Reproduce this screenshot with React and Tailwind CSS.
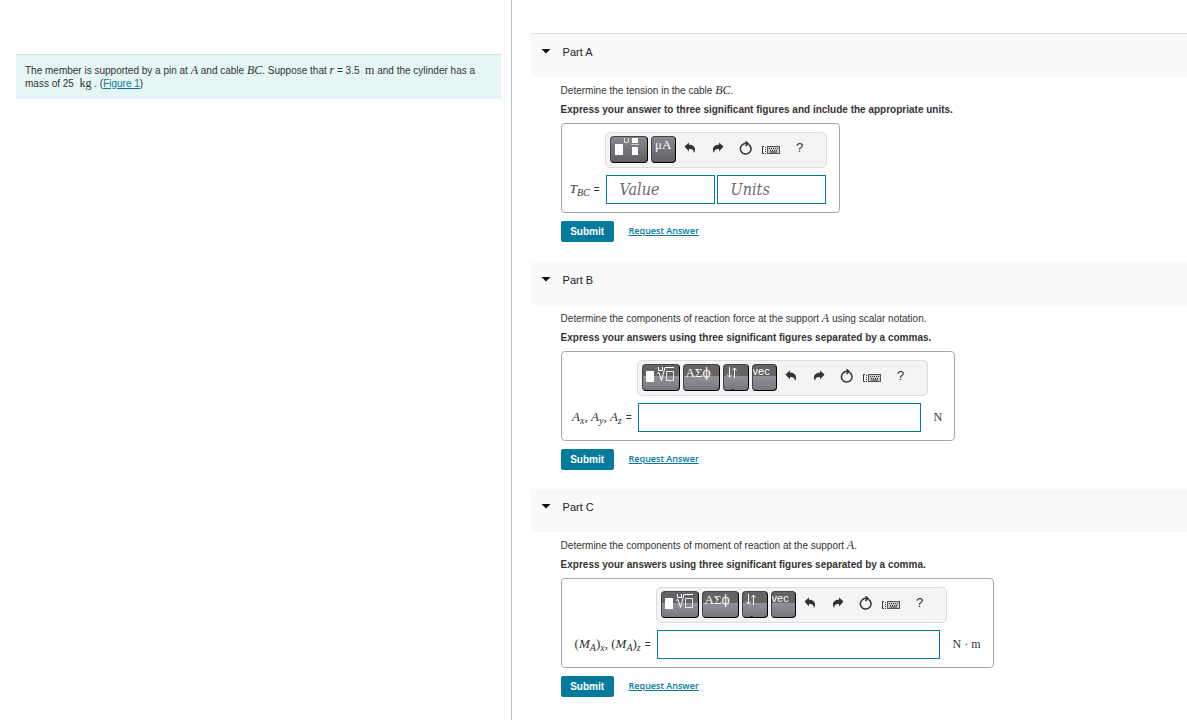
import React from "react";

const SANS = "font-['Liberation_Sans',Arial,sans-serif]";
const COPY = "font-['Liberation_Sans',Arial,sans-serif] text-[10px]";
const SERIF = "font-['Liberation_Serif','Times_New_Roman',serif]";

// math variable set in serif italics
function V({ children }) {
  return <i className={`${SERIF} text-[12px] leading-none`}>{children}</i>;
}

function Unit({ children }) {
  return <span className={`${SERIF} text-[12px] leading-none`}>{children}</span>;
}

function Sub({ children }) {
  return <span className="relative top-[3px] text-[10px]">{children}</span>;
}

function DarkButton({ label, className, children }) {
  return (
    <button
      type="button"
      aria-label={label}
      className={`h-[27px] shrink-0 overflow-hidden rounded-[4px] border border-t-[#444] border-r-black border-b-black border-l-[#444] bg-linear-to-b text-left text-white ${className}`}
    >
      {children}
    </button>
  );
}

const SPLIT = "from-[#646464] from-42% to-[#77777d] via-[#92929a] via-43%";
const SMOOTH = "from-[#88888e] to-[#606064]";

function FractionIcon() {
  return (
    <svg width="35" height="24" viewBox="0 0 35 24" fill="#fff">
      <rect x="4" y="6" width="8" height="11" />
      <path d="M13.5 0v4.500h4V0" fill="none" stroke="#ddd" />
      <rect x="21" y="0" width="6" height="5" />
      <rect x="20" y="6" width="8" height="1" fill="#ccc" />
      <rect x="21" y="9" width="6" height="8" />
    </svg>
  );
}

function RootIcon() {
  return (
    <svg width="35" height="24" viewBox="0 0 35 24" fill="none" stroke="#fff">
      <rect x="3" y="5" width="8" height="11" fill="#fff" stroke="none" />
      <path d="M15.500 1v3.500h4V1M14 7.500l2-1 2.500 8 3.500-13H31" />
      <rect x="23.500" y="5.500" width="7" height="9" stroke="#e4e4e4" />
    </svg>
  );
}

function ArrowsIcon() {
  return (
    <svg width="24" height="24" viewBox="0 0 24 24" fill="none" stroke="#fff">
      <path d="M5.500 1v10M3 8.500l2.500 2.500L8 8.500M10.500 12V2M8.500 4.500l2-2.500 2 2.500" />
      <path d="M7 23.500h3" stroke="#333" />
    </svg>
  );
}

function UndoIcon({ flip }) {
  return (
    <svg width="12" height="12" viewBox="0 0 12 12" fill="#333" className={flip ? "-scale-x-100" : ""}>
      <path d="M0.500 4.500L5 0.500v2.300c3.800 0 6.500 2 6 5.700-.2 1.200-.6 2-1.200 2.500.1-2.600-1-4-4.800-4v2.500z" />
    </svg>
  );
}

function ResetIcon() {
  return (
    <svg width="14" height="14" viewBox="0 0 14 14" fill="none" stroke="#333" strokeWidth="1.500">
      <path d="M9.500 3.300A5.300 5.300 0 1 1 5 2.800" />
      <path d="M4.500 2.500H9M6.500 0.300L9 2.600 6.500 5" />
    </svg>
  );
}

function KeyboardIcon() {
  return (
    <svg width="20" height="10" viewBox="0 0 20 10" fill="none" stroke="#333">
      <path d="M3 1.500H1.500v7H3" />
      <path d="M4.500 2v7" strokeDasharray="1 1" />
      <rect x="6.500" y="1.500" width="12" height="7" fill="#ccc" stroke="#555" />
      <path d="M8 3.500h9M9 5.500h8" strokeDasharray="1 1" />
      <path d="M9 7h7" />
    </svg>
  );
}

const iconButton = "flex h-6 items-center justify-center";

function Toolbar({ units }) {
  return (
    <div className="flex h-9 items-start rounded-[5px] border border-[#ddd] bg-[#f4f4f4] pt-[3px] pl-1">
      <div className="flex gap-[3px]">
        {units ? (
          <>
            <DarkButton label="Templates" className={`w-[38px] ${SMOOTH}`}>
              <FractionIcon />
            </DarkButton>
            <DarkButton label="Unit symbols" className={`flex w-[25px] justify-center ${SERIF} ${SMOOTH} text-[13px] leading-4`}>
              μA
            </DarkButton>
          </>
        ) : (
          <>
            <DarkButton label="Templates" className={`w-[38px] ${SPLIT}`}>
              <RootIcon />
            </DarkButton>
            <DarkButton label="Greek symbols" className={`flex w-[37px] pl-[2px] ${SERIF} ${SPLIT} text-[13px] leading-4`}>
              ΑΣ<span className="font-['DejaVu_Serif',serif] text-[12px]">ϕ</span>
            </DarkButton>
            <DarkButton label="Arrows" className={`w-[26px] ${SPLIT}`}>
              <ArrowsIcon />
            </DarkButton>
            <DarkButton label="Vectors" className={`flex w-[25px] ${SANS} ${SPLIT} text-[11px] leading-3`}>
              vec
            </DarkButton>
          </>
        )}
      </div>
      <button type="button" aria-label="Undo" className={`${iconButton} w-7`}>
        <UndoIcon />
      </button>
      <button type="button" aria-label="Redo" className={`${iconButton} w-7`}>
        <UndoIcon flip />
      </button>
      <button type="button" aria-label="Reset" className={`${iconButton} w-7`}>
        <ResetIcon />
      </button>
      <button type="button" aria-label="Keyboard shortcuts" className={`${iconButton} w-[22px] pt-1`}>
        <KeyboardIcon />
      </button>
      <button type="button" aria-label="Help" className={`${iconButton} w-9 text-[13px] text-[#333]`}>
        ?
      </button>
      <span className="w-2" />
    </div>
  );
}

const inputStyle =
  "h-[29px] min-w-0 border border-[#047a9c] bg-white px-[13px] font-['DejaVu_Serif_Condensed','DejaVu_Serif',serif] text-[16px] italic outline-none placeholder:text-[#6b6b6b]";

function AnswerBox({ id, label, labelWidth, unit, units }) {
  return (
    <div className="flex w-fit rounded-[4px] border border-[#a6a6a6] pt-2 pr-3 pb-2 pl-2">
      <label
        htmlFor={id}
        className={`${SERIF} mt-[42px] flex h-[29px] items-center justify-end pr-[5px] text-[13px] whitespace-nowrap text-[#333] ${labelWidth}`}
      >
        {label}
      </label>
      <div className="flex flex-col gap-[7px]">
        <Toolbar units={units} />
        {units ? (
          <div className="flex gap-[2px] px-px">
            <input id={id} placeholder="Value" className={`${inputStyle} w-[109px]`} />
            <input aria-label="Units" placeholder="Units" className={`${inputStyle} w-[109px]`} />
          </div>
        ) : (
          <input id={id} className={`${inputStyle} ml-px w-[283px]`} />
        )}
      </div>
      {unit && (
        <span className={`${SERIF} mt-[42px] flex h-[29px] items-center pl-[6px] text-[12px] text-[#333]`}>{unit}</span>
      )}
    </div>
  );
}

function Part({ title, first, text, instruction, children }) {
  return (
    <section className={first ? "pb-5" : "pb-[19px]"}>
      <div className={`bg-[#f9f9f9] ${first ? "border-t border-[#ddd]" : ""}`}>
        <button type="button" className="flex h-[43px] w-full items-start pt-[9px] pl-[10px] text-[#222]">
          <svg width="10" height="16" viewBox="0 0 10 16" className="mr-3">
            <path d="M0.500 6h9L5 10.500z" fill="#111" />
          </svg>
          <span className="text-[11px] leading-[18px]">{title}</span>
        </button>
      </div>
      <div className="pt-1 pl-[30px]">
        <p className={`h-[19px] leading-[19px] ${COPY}`}>{text}</p>
        <p className={`h-[19px] leading-[19px] font-bold ${COPY}`}>{instruction}</p>
        <div className="mt-1">{children}</div>
        <div className="mt-2 flex items-center gap-[15px]">
          <button type="button" className="h-[21px] w-[53px] rounded-[2px] bg-[#047a9c] text-[10px] font-bold text-white">
            Submit
          </button>
          <a href="#answer" className="pb-px font-['Open_Sans',sans-serif] text-[9px] leading-3 font-semibold text-[#047a9c] underline">
            Request Answer
          </a>
        </div>
      </div>
    </section>
  );
}

const EQ = <span className={`${SANS} pl-1 text-[10px]`}>=</span>;

export default function App() {
  return (
    <div className={`flex h-screen overflow-hidden bg-white text-[#333] ${SANS}`}>
      <aside className="w-[43.1%] shrink-0 border-r border-[#b8c0d0] pt-[54px] pr-[10px] pl-4">
        <div className={`min-h-[45px] border-t border-[#d4dcdc] bg-[#e6f6f6] pt-[9px] pr-3 pl-[9px] ${COPY} leading-3`}>
          The member is supported by a pin at <V>A</V> and cable <V>BC</V>. Suppose that <V>r</V> = 3.5&nbsp; <Unit>m</Unit> and
          the cylinder has a mass of 25&nbsp; <Unit>kg</Unit> . (
          <a href="#figure-1" className="text-[#047a9c] underline">
            Figure 1
          </a>
          )
        </div>
      </aside>

      <main className="min-w-0 flex-1 pt-[33px] pl-[19px]">
        <Part
          title="Part A"
          first
          text={<>Determine the tension in the cable <V>BC</V>.</>}
          instruction="Express your answer to three significant figures and include the appropriate units."
        >
          <AnswerBox
            id="tension"
            units
            labelWidth="w-[35px]"
            label={<span><i>T<Sub>BC</Sub></i>{EQ}</span>}
          />
        </Part>
        <Part
          title="Part B"
          text={<>Determine the components of reaction force at the support <V>A</V> using scalar notation.</>}
          instruction="Express your answers using three significant figures separated by a commas."
        >
          <AnswerBox
            id="reaction"
            unit="N"
            labelWidth="w-[67px]"
            label={<span><i>A<Sub>x</Sub></i>, <i>A<Sub>y</Sub></i>, <i>A<Sub>z</Sub></i>{EQ}</span>}
          />
        </Part>
        <Part
          title="Part C"
          text={<>Determine the components of moment of reaction at the support <V>A</V>.</>}
          instruction="Express your answers using three significant figures separated by a comma."
        >
          <AnswerBox
            id="moment"
            unit="N · m"
            labelWidth="w-[86px]"
            label={<span>(<i>M<Sub>A</Sub></i>)<i><Sub>x</Sub></i>, (<i>M<Sub>A</Sub></i>)<i><Sub>z</Sub></i>{EQ}</span>}
          />
        </Part>
      </main>
    </div>
  );
}
